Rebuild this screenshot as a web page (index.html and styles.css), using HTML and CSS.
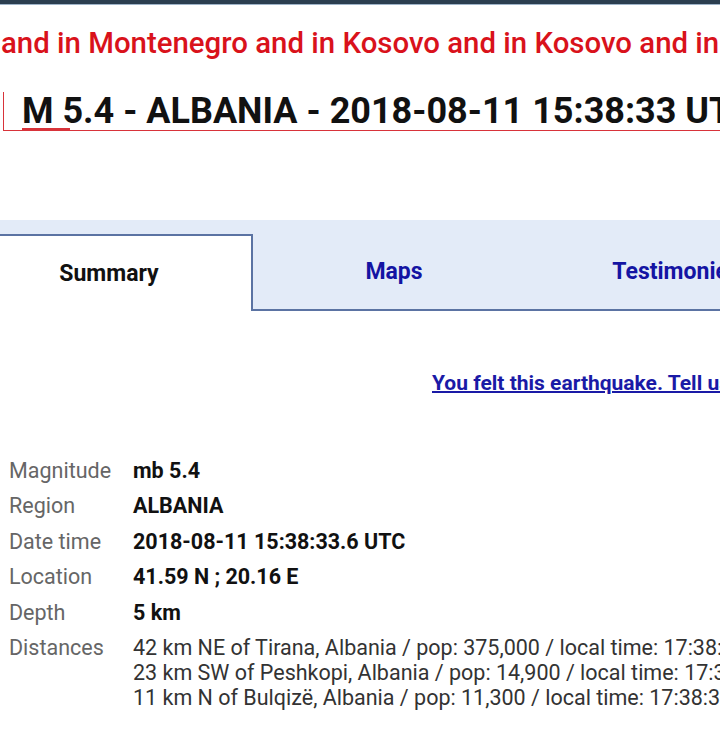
FILE: index.html
```html
<!DOCTYPE html>
<html>
<head>
<meta charset="utf-8">
<link rel="stylesheet" href="styles.css">
</head>
<body>
<div class="topbar"></div>
<div class="marquee">and in Montenegro and in Kosovo and in Kosovo and in Kosovo</div>
<div class="titlebox">
  <h1 class="title">M 5.4 - ALBANIA - 2018-08-11 15:38:33 UTC</h1>
</div>
<div class="tabs">
  <div class="tab active">Summary</div>
  <div class="tab">Maps</div>
  <div class="tab">Testimonies</div>
</div>
<div class="felt"><a class="felt-link" href="#">You felt this earthquake. Tell us!</a></div>
<div class="details">
  <div class="label">Magnitude</div><div class="value">mb 5.4</div>
  <div class="label">Region</div><div class="value">ALBANIA</div>
  <div class="label">Date time</div><div class="value">2018-08-11 15:38:33.6 UTC</div>
  <div class="label">Location</div><div class="value">41.59 N ; 20.16 E</div>
  <div class="label">Depth</div><div class="value">5 km</div>
  <div class="label">Distances</div>
  <div class="value dist">
    <div>42 km NE of Tirana, Albania / pop: 375,000 / local time: 17:38:33.6 2018-08-11</div>
    <div>23 km SW of Peshkopi, Albania / pop: 14,900 / local time: 17:38:33.6 2018-08-11</div>
    <div>11 km N of Bulqizë, Albania / pop: 11,300 / local time: 17:38:33.6 2018-08-11</div>
  </div>
</div>
</body>
</html>
```
FILE: styles.css
```css
html, body {
  margin: 0;
  padding: 0;
  background: #fff;
  overflow: hidden;
}
body {
  font-family: Roboto, "Liberation Sans", sans-serif;
  width: 720px;
  height: 736px;
  overflow: hidden;
}
.topbar {
  height: 4px;
  background: #2b3e50;
  border-bottom: 1px solid #9fb4c9;
}
.marquee {
  margin-top: 21px;
  padding-left: 1px;
  color: #d9121b;
  font-size: 29.4px;
  font-weight: 500;
  line-height: 34px;
  white-space: nowrap;
  overflow: hidden;
}
.titlebox {
  margin-top: 32px;
  margin-left: 3px;
  border-left: 1px solid #d8333a;
  border-bottom: 1px solid #d8333a;
  position: relative;
  height: 38px;
  white-space: nowrap;
  overflow: hidden;
}
.titlebox::after {
  content: "";
  position: absolute;
  left: 18px;
  bottom: 0;
  width: 48px;
  height: 2px;
  background: #d8333a;
}
.title {
  margin: 0;
  padding-left: 18px;
  font-size: 36px;
  font-weight: 700;
  line-height: 38px;
  color: #111;
}
.tabs {
  margin-top: 89px;
  background: #e3ebf8;
  padding-top: 14px;
  display: flex;
  margin-left: -33px;
  width: 900px;
  height: 75px;
  border-bottom: 2px solid #5b73a3;
}
.tab {
  flex: 0 0 282px;
  display: flex;
  align-items: center;
  justify-content: center;
  font-size: 23px;
  font-weight: 700;
  color: #1414a3;
  box-sizing: border-box;
}
.tab.active {
  flex-basis: 286px;
  background: #fff;
  color: #111;
  border-top: 2px solid #5b73a3;
  border-right: 2px solid #5b73a3;
  margin-bottom: -2px;
}
.felt {
  margin-top: 60px;
  padding-left: 432px;
  line-height: 25px;
  white-space: nowrap;
  overflow: hidden;
}
.felt-link {
  color: #1a1aa6;
  font-size: 21px;
  font-weight: 700;
  text-decoration: underline;
  text-decoration-thickness: 2px;
}
.details {
  margin-top: 61px;
  padding-left: 9px;
  display: grid;
  grid-template-columns: 124px 1fr;
  row-gap: 10.4px;
  font-size: 21.5px;
  line-height: 25px;
  white-space: nowrap;
}
.label {
  color: #666;
}
.value {
  color: #111;
  font-weight: 700;
}
.value.dist {
  font-weight: 400;
  color: #333;
}
```
